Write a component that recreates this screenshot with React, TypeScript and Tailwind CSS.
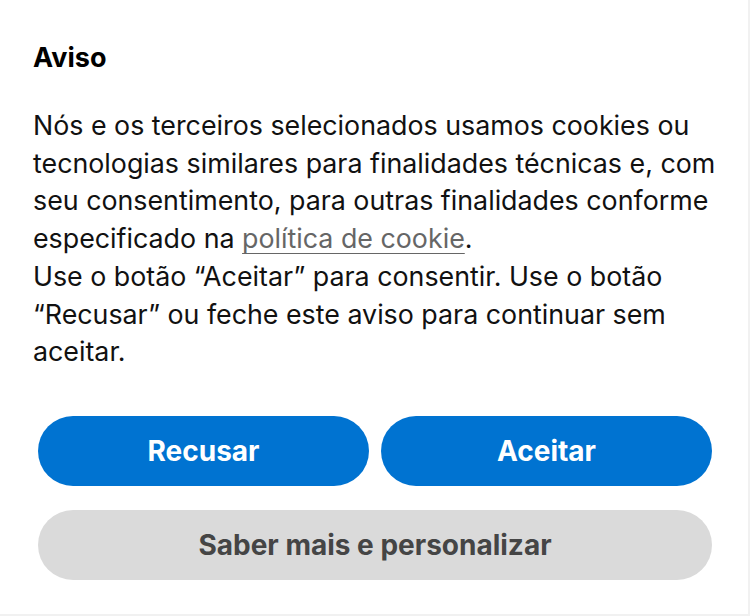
export default function App() {
  return (
    <div
      className="h-[616px] w-[750px] border-r-2 border-b-2 border-[#f1f1f1] bg-white"
      style={{ fontFamily: "Inter, 'Noto Sans', sans-serif" }}
    >
      <div className="pr-[31px] pl-[33px] pt-[42px]">
        <h1 className="text-[27px] leading-[32px] font-bold text-black">Aviso</h1>
        <p className="mt-[33px] text-[26.8px] leading-[37.7px] text-[#111]">
          Nós e os terceiros selecionados usamos cookies ou tecnologias similares para finalidades
          técnicas e, com seu consentimento, para outras finalidades conforme especificado na{" "}
          <a href="#" className="text-[#666] underline decoration-1 underline-offset-[5px]">
            política de cookie
          </a>
          .
          <br />
          Use o botão “Aceitar” para consentir. Use o botão “Recusar” ou feche este aviso para
          continuar sem aceitar.
        </p>
      </div>

      <div className="mt-[45px] flex flex-col gap-[24px] pr-[36px] pl-[38px]">
        <div className="flex gap-[12px]">
          <button className="h-[70px] flex-1 rounded-full bg-[#0073d1] text-[28px] font-bold text-white">
            Recusar
          </button>
          <button className="h-[70px] flex-1 rounded-full bg-[#0073d1] text-[28px] font-bold text-white">
            Aceitar
          </button>
        </div>
        <button className="h-[70px] w-full rounded-full bg-[#dadada] text-[28px] font-bold text-[#454545]">
          Saber mais e personalizar
        </button>
      </div>
    </div>
  );
}
